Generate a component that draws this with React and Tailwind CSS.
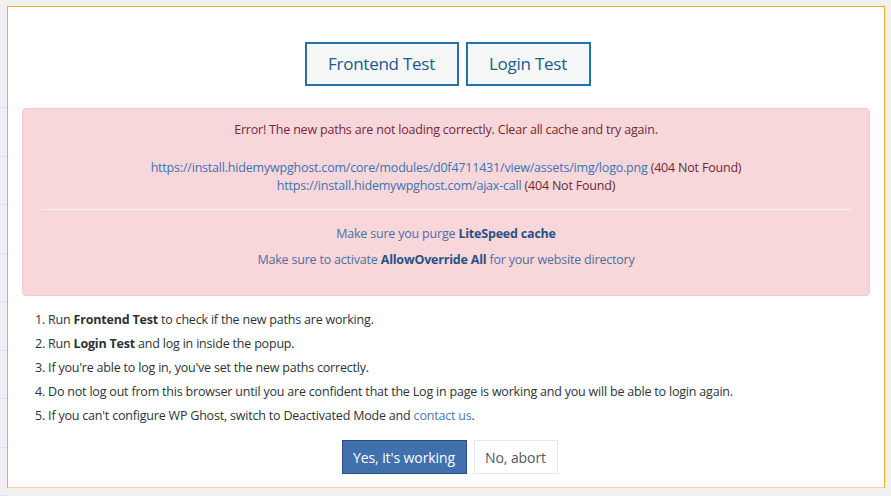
import React from "react";

const steps = [
  <>Run <b>Frontend Test</b> to check if the new paths are working.</>,
  <>Run <b>Login Test</b> and log in inside the popup.</>,
  <>If you're able to log in, you've set the new paths correctly.</>,
  <>Do not log out from this browser until you are confident that the Log in page is working and you will be able to login again.</>,
  <>
    If you can't configure WP Ghost, switch to Deactivated Mode and{" "}
    <a href="#" className="text-[#4a78b0]">contact us</a>.
  </>,
];

export default function App() {
  return (
    <div className="w-[891px] h-[496px] bg-[#f0f0f1] flex font-['Open_Sans',sans-serif] overflow-hidden">
      {/* page rows peeking out behind the modal */}
      <div className="w-[7px] shrink-0 pt-[60px] flex flex-col">
        {Array.from({ length: 9 }).map((_, i) => (
          <div key={i} className="h-[48.6px] border-b border-[#dde5ee]" />
        ))}
      </div>

      <div className="mt-[6px] w-[878px] h-[482px] bg-white border border-[#ffa726] border-b-[#ffd585] px-[14px] pt-[35px] flex flex-col">
        {/* Test buttons */}
        <div className="flex justify-center gap-[7px] pl-[3px]">
          <button className="h-[44px] w-[154px] bg-[#f6f7f7] border-2 border-[#2271b1] text-[#21598f] text-[17px] tracking-[-0.25px]">
            Frontend Test
          </button>
          <button className="h-[44px] w-[125px] bg-[#f6f7f7] border-2 border-[#2271b1] text-[#21598f] text-[17px] tracking-[-0.25px]">
            Login Test
          </button>
        </div>

        {/* Error alert */}
        <div className="mt-[22px] h-[188px] bg-[#f8d7da] border border-[#f5c6cb] rounded-[4px] px-[18px] pt-[12px] text-[12.5px] tracking-[-0.2px] leading-[18px] text-center">
          <p className="text-[#7a2636]">
            Error! The new paths are not loading correctly. Clear all cache and try again.
          </p>
          <div className="mt-[20px] text-[#6b2a3a]">
            <div>
              <a href="#" className="text-[#3c72b5]">
                https://install.hidemywpghost.com/core/modules/d0f4711431/view/assets/img/logo.png
              </a>{" "}
              (404 Not Found)
            </div>
            <div>
              <a href="#" className="text-[#3c72b5]">https://install.hidemywpghost.com/ajax-call</a>{" "}
              (404 Not Found)
            </div>
          </div>
          <hr className="mt-[14px] border-0 border-t border-[#fdf1f2]" />
          <p className="mt-[15px] text-[#4b6fa0]">
            Make sure you purge <b className="text-[#2a5187]">LiteSpeed cache</b>
          </p>
          <p className="mt-[8px] text-[#4b6fa0]">
            Make sure to activate <b className="text-[#2a5187]">AllowOverride All</b> for your website directory
          </p>
        </div>

        {/* Steps */}
        <ol className="mt-[15px] pl-[13px] text-[12.5px] tracking-[-0.2px] leading-[18px] text-[#2c3338] flex flex-col gap-[6px]">
          {steps.map((s, i) => (
            <li key={i}>
              {i + 1}. {s}
            </li>
          ))}
        </ol>

        {/* Confirm buttons */}
        <div className="mt-[15px] flex justify-center gap-[7px] pl-[7px]">
          <button className="h-[34px] w-[125px] bg-[#4070ae] border border-[#264f85] text-white text-[14px] tracking-[-0.1px]">
            Yes, it's working
          </button>
          <button className="h-[34px] w-[84px] bg-white border border-[#e2e8f0] text-[#50575e] text-[14px] tracking-[-0.1px]">
            No, abort
          </button>
        </div>
      </div>
    </div>
  );
}
